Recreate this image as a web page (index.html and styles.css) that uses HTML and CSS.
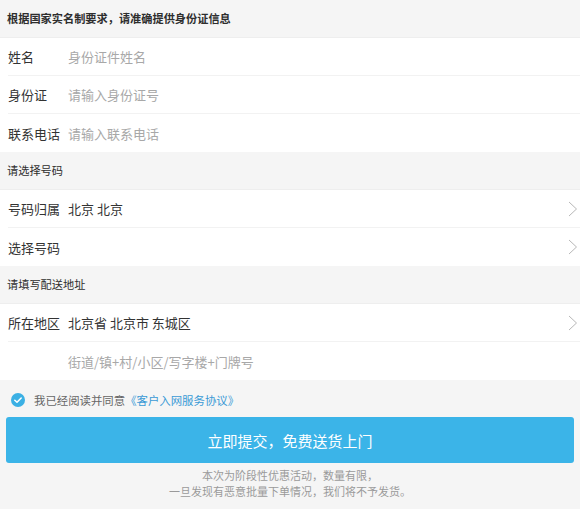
FILE: index.html
```html
<!DOCTYPE html>
<html lang="zh-CN">
<head>
<meta charset="utf-8">
<title>实名登记</title>
<link rel="stylesheet" href="styles.css">
</head>
<body>
<div class="page">
  <div class="section-title strong">根据国家实名制要求，请准确提供身份证信息</div>
  <div class="group">
    <div class="row"><span class="label">姓名</span><span class="placeholder">身份证件姓名</span></div>
    <div class="row"><span class="label">身份证</span><span class="placeholder">请输入身份证号</span></div>
    <div class="row last"><span class="label">联系电话</span><span class="placeholder">请输入联系电话</span></div>
  </div>

  <div class="section-title">请选择号码</div>
  <div class="group">
    <div class="row"><span class="label">号码归属</span><span class="value">北京 北京</span>
      <svg class="chev" width="10" height="16" viewBox="0 0 10 16"><path d="M1 1 L8.5 8 L1 15" fill="none" stroke="#b8b8b8" stroke-width="1"/></svg>
    </div>
    <div class="row last"><span class="label">选择号码</span><span class="value"></span>
      <svg class="chev" width="10" height="16" viewBox="0 0 10 16"><path d="M1 1 L8.5 8 L1 15" fill="none" stroke="#b8b8b8" stroke-width="1"/></svg>
    </div>
  </div>

  <div class="section-title">请填写配送地址</div>
  <div class="group">
    <div class="row"><span class="label">所在地区</span><span class="value">北京省 北京市 东城区</span>
      <svg class="chev" width="10" height="16" viewBox="0 0 10 16"><path d="M1 1 L8.5 8 L1 15" fill="none" stroke="#b8b8b8" stroke-width="1"/></svg>
    </div>
    <div class="row last"><span class="label"></span><span class="placeholder">街道/镇+村/小区/写字楼+门牌号</span></div>
  </div>

  <div class="agree">
    <span class="check">
      <svg width="14" height="14" viewBox="0 0 14 14"><circle cx="7" cy="7" r="7" fill="#3bb0e4"/><path d="M3.8 7.2 L6 9.3 L10.2 5" fill="none" stroke="#fff" stroke-width="1.5" stroke-linecap="round" stroke-linejoin="round"/></svg>
    </span>
    <span class="agree-text">我已经阅读并同意</span><span class="agree-link">《客户入网服务协议》</span>
  </div>

  <div class="submit">立即提交，免费送货上门</div>

  <p class="note">本次为阶段性优惠活动，数量有限，<br>一旦发现有恶意批量下单情况，我们将不予发货。</p>
</div>
</body>
</html>
```

FILE: styles.css
```css
* { box-sizing: border-box; }
html, body {
  margin: 0;
  padding: 0;
  background: #f5f5f5;
}
body {
  font-family: "Noto Sans CJK SC", "Noto Sans", sans-serif;
  color: #333;
}
.page {
  width: 580px;
  min-height: 509px;
  background: #f5f5f5;
}
.section-title {
  height: 38px;
  line-height: 36px;
  padding-left: 7px;
  font-size: 11.2px;
  color: #2e2e2e;
  background: #f5f5f5;
  border-bottom: 1px solid #eeeeee;
}
.section-title.strong {
  font-weight: bold;
}
.group {
  background: #fff;
}
.row {
  height: 38px;
  margin-left: 8px;
  border-bottom: 1px solid #f2f2f2;
  display: flex;
  align-items: center;
  font-size: 13px;
  padding-right: 2px;
}
.row.last {
  border-bottom: none;
}
.label {
  width: 60px;
  flex: none;
  color: #333;
}
.value {
  flex: 1;
  color: #333;
}
.placeholder {
  flex: 1;
  color: #a8a8a8;
}
.chev {
  flex: none;
  display: block;
}
.agree {
  height: 37px;
  display: flex;
  align-items: center;
  padding-left: 11px;
  font-size: 11.4px;
  padding-top: 2px;
}
.check {
  width: 14px;
  height: 14px;
  margin-right: 9px;
  display: block;
}
.check svg { display: block; }
.agree-text { color: #666; }
.agree-link { color: #3a9ad6; }
.submit {
  margin: 0 6px;
  height: 46px;
  border-radius: 3px;
  background: #3bb4e8;
  color: #fff;
  font-size: 15px;
  display: flex;
  align-items: center;
  justify-content: center;
}
.note {
  margin: 4px 0 0;
  text-align: center;
  font-size: 11px;
  line-height: 16px;
  color: #9a9a9a;
}
```
